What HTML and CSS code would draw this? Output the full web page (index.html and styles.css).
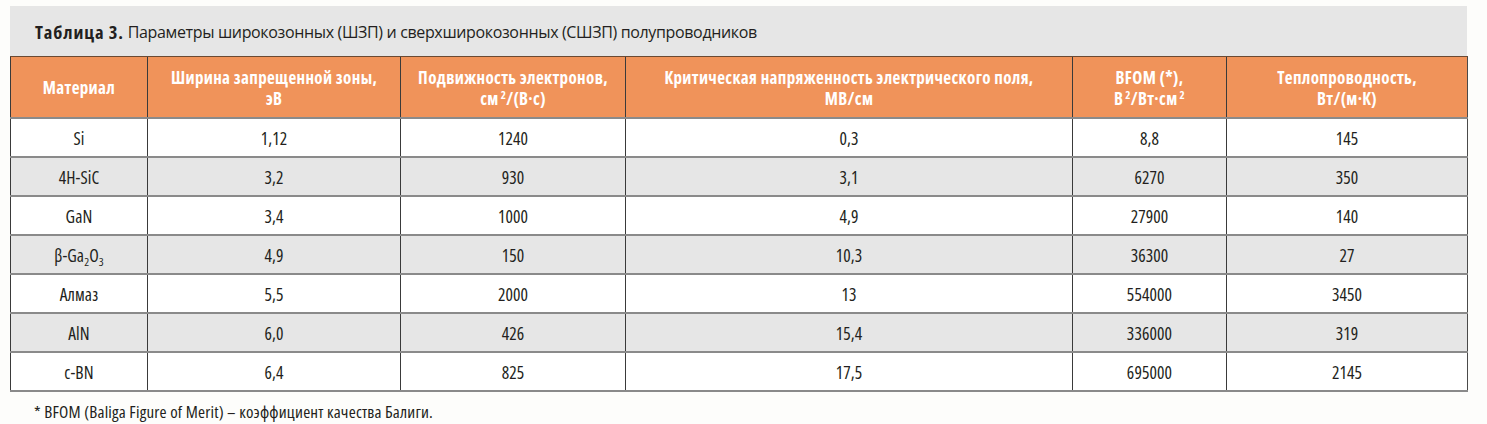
FILE: index.html
```html
<!DOCTYPE html>
<html lang="ru">
<head>
<meta charset="utf-8">
<title>Таблица 3</title>
<link rel="stylesheet" href="styles.css">
</head>
<body>
<div class="wrap">
  <div class="caption"><b>Таблица 3.</b> Параметры широкозонных (ШЗП) и сверхширокозонных (СШЗП) полупроводников</div>
  <table class="data">
    <colgroup>
      <col class="c1"><col class="c2"><col class="c3"><col class="c4"><col class="c5"><col class="c6">
    </colgroup>
    <thead>
      <tr>
        <th>Материал</th>
        <th>Ширина запрещенной зоны,<br>эВ</th>
        <th>Подвижность электронов,<br>см<sup>2</sup>/(В·с)</th>
        <th>Критическая напряженность электрического поля,<br>МВ/см</th>
        <th>BFOM (*),<br>В<sup>2</sup>/Вт·см<sup>2</sup></th>
        <th>Теплопроводность,<br>Вт/(м·К)</th>
      </tr>
    </thead>
    <tbody>
      <tr><td>Si</td><td>1,12</td><td>1240</td><td>0,3</td><td>8,8</td><td>145</td></tr>
      <tr><td>4H-SiC</td><td>3,2</td><td>930</td><td>3,1</td><td>6270</td><td>350</td></tr>
      <tr><td>GaN</td><td>3,4</td><td>1000</td><td>4,9</td><td>27900</td><td>140</td></tr>
      <tr><td>β-Ga<sub>2</sub>O<sub>3</sub></td><td>4,9</td><td>150</td><td>10,3</td><td>36300</td><td>27</td></tr>
      <tr><td>Алмаз</td><td>5,5</td><td>2000</td><td>13</td><td>554000</td><td>3450</td></tr>
      <tr><td>AlN</td><td>6,0</td><td>426</td><td>15,4</td><td>336000</td><td>319</td></tr>
      <tr><td>c-BN</td><td>6,4</td><td>825</td><td>17,5</td><td>695000</td><td>2145</td></tr>
    </tbody>
  </table>
  <p class="note">* BFOM (Baliga Figure of Merit) – коэффициент качества Балиги.</p>
</div>
</body>
</html>
```
FILE: styles.css
```css
html, body {
  margin: 0;
  padding: 0;
  background: #fdfdfb;
}
body {
  font-family: "Open Sans", "Noto Sans", sans-serif;
  font-stretch: 75%;
  color: #231f20;
}
.wrap {
  margin-left: 10px;
  padding-top: 6px;
  width: 1457px;
}
.caption {
  height: 50px;
  box-sizing: border-box;
  background: #e6e6e6;
  padding-left: 25px;
  padding-top: 1px;
  display: flex;
  align-items: center;
  font-size: 16px;
  font-stretch: 100%;
  letter-spacing: -0.35px;
  white-space: pre;
}
.caption b {
  font-weight: 700;
  font-stretch: 75%;
  font-size: 18.5px;
  letter-spacing: 0.9px;
}
.data {
  width: 1457px;
  border-collapse: collapse;
  table-layout: fixed;
  border-left: 1px solid #4a4a4a;
  border-right: 1px solid #4a4a4a;
  border-bottom: 2px solid #8a8a8a;
}
.c1 { width: 137px; }
.c2 { width: 253px; }
.c3 { width: 225px; }
.c4 { width: 447px; }
.c5 { width: 154px; }
.c6 { width: 241px; }
.data th {
  background: #f0935a;
  color: #fff;
  font-weight: 700;
  font-size: 17px;
  line-height: 20.5px;
  letter-spacing: 0.35px;
  height: 57px;
  padding: 3px 4px 0;
  border-top: 1px solid #6b4a33;
  border-left: 1px solid #3a3a3a;
  border-bottom: 2px solid #8a8a8a;
  text-align: center;
  vertical-align: middle;
}
.data td {
  height: 37px;
  padding: 0 4px;
  font-size: 17.5px;
  letter-spacing: 0.1px;
  text-align: center;
  vertical-align: middle;
  border-left: 1px solid #3a3a3a;
  border-bottom: 2px solid #8a8a8a;
}
.data tbody tr:nth-child(odd) td { background: #ffffff; }
.data tbody tr:nth-child(even) td { background: #e6e6e6; }
.data sup {
  font-size: 11px;
  line-height: 0;
  vertical-align: 6px;
  margin-left: 2px;
}
.data sub {
  font-size: 11.5px;
  line-height: 0;
  vertical-align: -4px;
}
.note {
  margin: 8px 0 0 24px;
  font-size: 17px;
  letter-spacing: 0.2px;
}
```
